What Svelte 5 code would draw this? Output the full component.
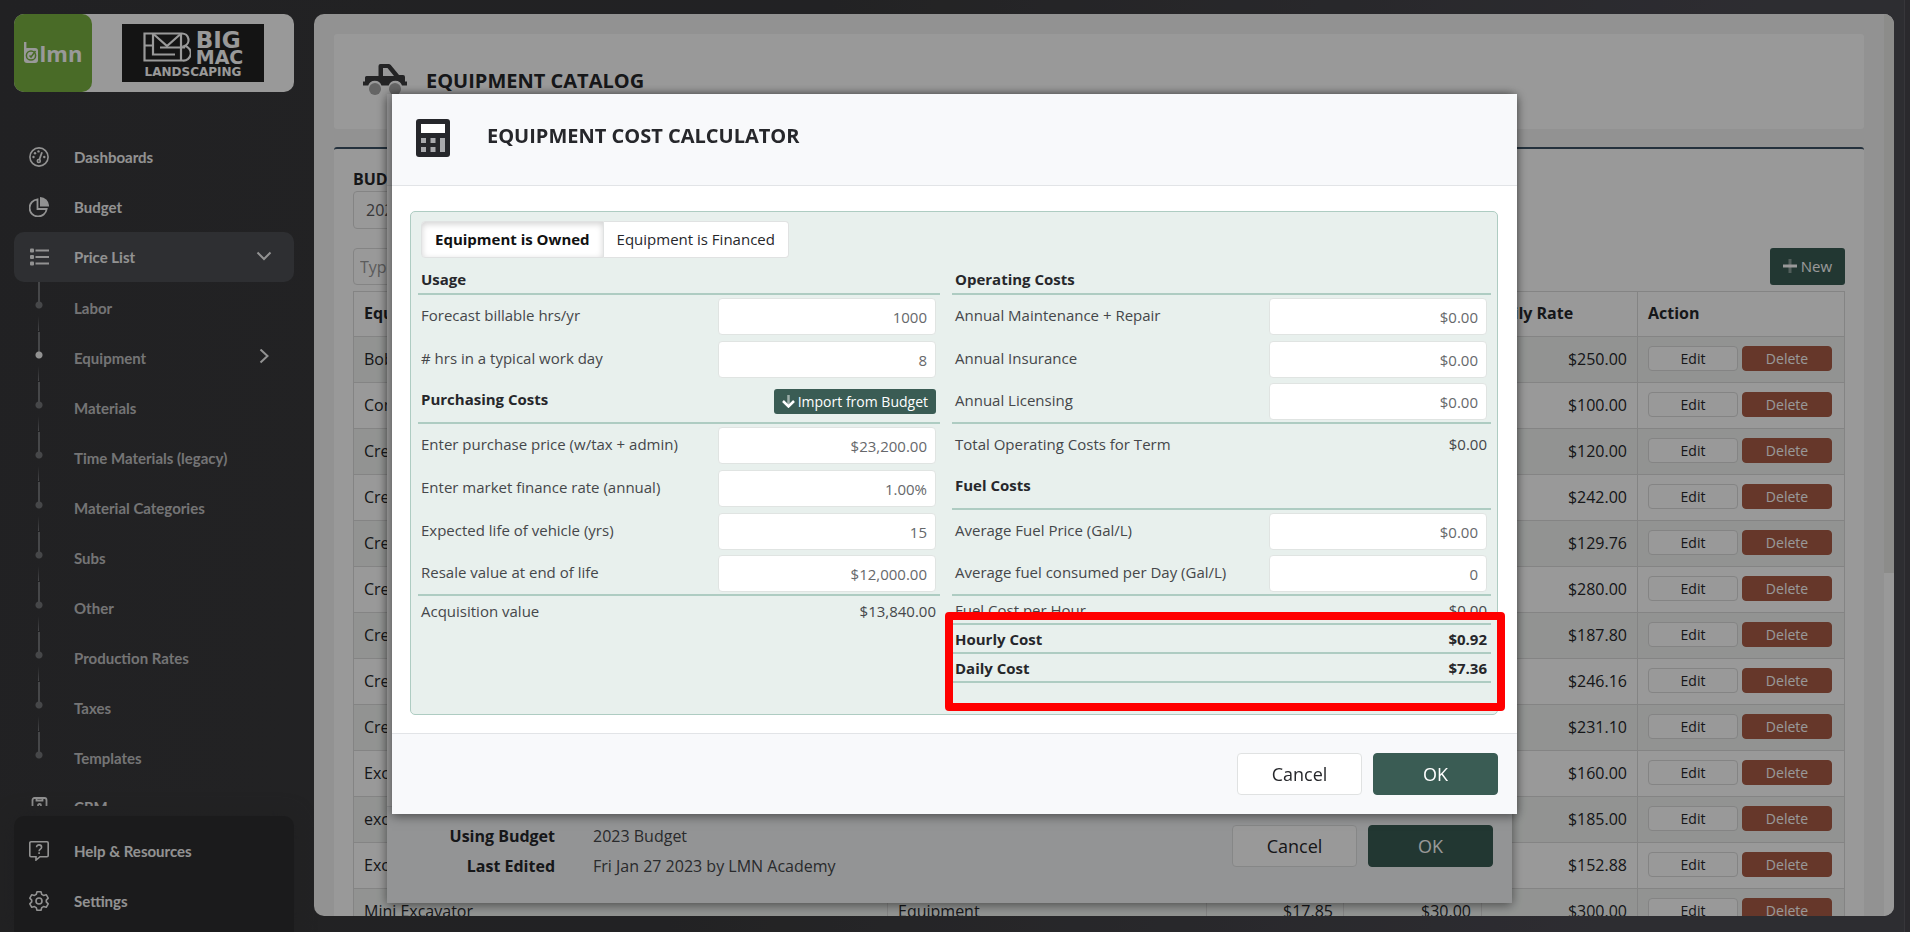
<script lang="ts">
  type Field = {
    kind: "field" | "total" | "heading";
    label: string;
    value?: string;
    ruled?: boolean;
    action?: string;
    bold?: boolean;
    compact?: boolean;
  };

  const subItems = [
    "Labor",
    "Equipment",
    "Materials",
    "Time Materials (legacy)",
    "Material Categories",
    "Subs",
    "Other",
    "Production Rates",
    "Taxes",
    "Templates",
  ];

  const equipment = [
    { name: "Bobcat", cost: "$21.40", rate: "$25.00", daily: "$250.00" },
    { name: "Compactor", cost: "$6.10", rate: "$10.00", daily: "$100.00" },
    { name: "Crew Truck 1", cost: "$8.25", rate: "$12.00", daily: "$120.00" },
    { name: "Crew Truck 2", cost: "$16.80", rate: "$24.20", daily: "$242.00" },
    { name: "Crew Truck 3", cost: "$9.10", rate: "$12.98", daily: "$129.76" },
    { name: "Crew Truck 4", cost: "$19.60", rate: "$28.00", daily: "$280.00" },
    { name: "Crew Truck 5", cost: "$13.15", rate: "$18.78", daily: "$187.80" },
    { name: "Crew Truck 6", cost: "$17.20", rate: "$24.62", daily: "$246.16" },
    { name: "Crew Truck 7", cost: "$16.20", rate: "$23.11", daily: "$231.10" },
    { name: "Excavator", cost: "$11.20", rate: "$16.00", daily: "$160.00" },
    { name: "excavator", cost: "$12.95", rate: "$18.50", daily: "$185.00" },
    { name: "Excavator", cost: "$10.70", rate: "$15.29", daily: "$152.88" },
    { name: "Mini Excavator", cost: "$17.85", rate: "$30.00", daily: "$300.00" },
  ];

  const purchasing: Field[] = [
    { kind: "heading", label: "Usage", ruled: true, compact: true },
    { kind: "field", label: "Forecast billable hrs/yr", value: "1000" },
    { kind: "field", label: "# hrs in a typical work day", value: "8" },
    { kind: "heading", label: "Purchasing Costs", action: "Import from Budget", ruled: true },
    { kind: "field", label: "Enter purchase price (w/tax + admin)", value: "$23,200.00" },
    { kind: "field", label: "Enter market finance rate (annual)", value: "1.00%" },
    { kind: "field", label: "Expected life of vehicle (yrs)", value: "15" },
    { kind: "field", label: "Resale value at end of life", value: "$12,000.00", ruled: true },
    { kind: "total", label: "Acquisition value", value: "$13,840.00", compact: true },
  ];

  const operating: Field[] = [
    { kind: "heading", label: "Operating Costs", ruled: true, compact: true },
    { kind: "field", label: "Annual Maintenance + Repair", value: "$0.00" },
    { kind: "field", label: "Annual Insurance", value: "$0.00" },
    { kind: "field", label: "Annual Licensing", value: "$0.00", ruled: true },
    { kind: "total", label: "Total Operating Costs for Term", value: "$0.00" },
    { kind: "heading", label: "Fuel Costs", ruled: true },
    { kind: "field", label: "Average Fuel Price (Gal/L)", value: "$0.00" },
    { kind: "field", label: "Average fuel consumed per Day (Gal/L)", value: "0", ruled: true },
    { kind: "total", label: "Fuel Cost per Hour", value: "$0.00", ruled: true, compact: true },
    { kind: "total", label: "Hourly Cost", value: "$0.92", ruled: true, compact: true, bold: true },
    { kind: "total", label: "Daily Cost", value: "$7.36", ruled: true, compact: true, bold: true },
  ];

  const columns = [purchasing, operating];

  let ownership = $state("owned");
</script>

<div class="app">
  <aside class="sidebar">
    <div class="brand">
      <div class="lmn">
        <svg width="14" height="22" viewBox="0 0 14 22" fill="none" stroke="#fff" aria-hidden="true">
          <path d="M1.2 0v18.5" stroke-width="2.4" />
          <rect x="0" y="6" width="14" height="15" rx="3" fill="#fff" stroke="none" />
          <circle cx="7" cy="13.500" r="4.600" stroke="#7bb241" stroke-width="1.500" />
          <path d="M5.500 13.500l1.500 1.500 4.500-6" stroke="#7bb241" stroke-width="1.500" />
        </svg>
        <span>lmn</span>
      </div>
      <div class="company">
        <div class="plate">
          <div class="plate-top">
            <svg width="48" height="30" viewBox="0 0 48 30" fill="none" stroke="#fff" stroke-width="2.2" aria-hidden="true">
              <path d="M1.500 1.500H39a6.500 6.500 0 0 1 2.500 12.500A7.200 7.200 0 0 1 39.500 28.500H1.500z" />
              <path d="M10 2v20.500H32M1.500 13.500H10M17 15.500h25" />
              <path d="M11 2.500l13 11.500L37 2.500M38 2v26" />
            </svg>
            <div class="plate-words">
              <span class="big">BIG</span>
              <span class="mac">MAC</span>
            </div>
          </div>
          <span class="land">LANDSCAPING</span>
        </div>
      </div>
    </div>

    <nav class="menu">
      <a class="item" href="#dashboards">
        <svg class="icon" viewBox="0 0 20 20" fill="none" stroke="currentColor" stroke-width="1.600">
          <circle cx="10" cy="10" r="9.100" />
          <path d="M10.300 12.800L13 5.200" stroke-width="1.800" />
          <circle cx="9.800" cy="14" r="1.500" />
          <g fill="currentColor" stroke="none">
            <circle cx="4.500" cy="10" r="1.200" />
            <circle cx="6" cy="6.200" r="1.200" />
            <circle cx="9.500" cy="4.400" r="1.200" />
            <circle cx="15.300" cy="10" r="1.200" />
          </g>
        </svg>
        Dashboards
      </a>
      <a class="item" href="#budget">
        <svg class="icon" viewBox="0 0 20 20">
          <path d="M8.500 2.300A8.600 8.600 0 1 0 17.700 12H8.500z" fill="none" stroke="currentColor" stroke-width="1.800" />
          <path d="M11 0a9 9 0 0 1 9 9.500h-9z" fill="currentColor" />
        </svg>
        Budget
      </a>
      <a class="item active" href="#price-list">
        <svg class="icon" viewBox="0 0 20 20" fill="currentColor">
          <rect x="1" y="1.500" width="4" height="4" rx="1" />
          <rect x="1" y="8" width="4" height="4" rx="1" />
          <rect x="1" y="14.500" width="4" height="4" rx="1" />
          <path d="M6.500 2.600H20v2H6.500zM6.500 9H20v2H6.500zM6.500 15.400H20v2H6.500z" />
        </svg>
        <span class="grow">Price List</span>
        <svg class="arrow" viewBox="0 0 16 16" fill="none" stroke="currentColor" stroke-width="2"><path d="M1.500 3.500L8 10l6.500-6.500" /></svg>
      </a>
      {#each subItems as item}
        <a class="item sub" class:current={item === "Equipment"} href={"#" + item.toLowerCase().replaceAll(" ", "-")}>
          <span class="track"></span>
          <span class="grow">{item}</span>
          {#if item === "Equipment"}
            <svg class="arrow" viewBox="0 0 16 16" fill="none" stroke="currentColor" stroke-width="2"><path d="M4.500 0.500L11.500 7l-7 6.500" /></svg>
          {/if}
        </a>
      {/each}
      <a class="item" href="#crm">
        <svg class="icon" viewBox="0 0 20 20" fill="none" stroke="currentColor" stroke-width="1.800">
          <rect x="3.500" y="1" width="14" height="18" rx="2" />
          <path d="M7.500 1v2.500h6V1" />
          <circle cx="10.500" cy="8.500" r="1.500" />
        </svg>
        CRM
      </a>
    </nav>

    <nav class="support">
      <a class="item" href="#help">
        <svg class="icon" viewBox="0 0 20 20" fill="none" stroke="currentColor" stroke-width="1.600">
          <path d="M2 0.800h16a1.200 1.200 0 0 1 1.200 1.200v12.500a1.200 1.200 0 0 1-1.200 1.200h-7L7 19v-3.300H2A1.200 1.200 0 0 1 .8 14.500V2A1.200 1.200 0 0 1 2 .8z" />
          <path d="M7.600 6.200c0-3.200 5-3 5 0 0 2-2.500 1.900-2.500 4M10.100 11.300v1.800" />
        </svg>
        Help &amp; Resources
      </a>
      <a class="item" href="#settings">
        <svg class="icon" viewBox="0 0 20 20" fill="none" stroke="currentColor" stroke-width="1.600" stroke-linejoin="round">
          <path d="M8 .8h4l.8 2.600 1.700 1 2.700-.7 2 3.400-1.900 2v1.800l1.900 2-2 3.400-2.700-.7-1.700 1-.8 2.600H8l-.8-2.600-1.700-1-2.700.7-2-3.400 1.900-2V9.100l-1.900-2 2-3.400 2.700.7 1.700-1z" />
          <circle cx="10" cy="10" r="3" />
        </svg>
        Settings
      </a>
    </nav>
  </aside>

  <main class="content">
    <div class="page">
      <header class="card title-card">
        <svg width="44" height="32" viewBox="0 0 44 32" aria-hidden="true">
          <path d="M15.500 12V2a2 2 0 0 1 2-2h8a3 3 0 0 1 2.300 1.100L36 11h4a2 2 0 0 1 2 2v4.500h2v4h-5a7 7 0 0 0-13.300 0h-7.200a7 7 0 0 0-13.300 0H0v-4h2V13.500A1.500 1.500 0 0 1 3.500 12zM20 4v8h11l-6.500-8z" fill="#3c3c3f" fill-rule="evenodd" />
          <circle cx="12" cy="25" r="6" fill="#a8a8a8" />
          <circle cx="32" cy="25" r="6" fill="#a8a8a8" />
        </svg>
        <h1>EQUIPMENT CATALOG</h1>
      </header>

      <section class="card catalog">
        <label class="caption" for="budget">BUDGET</label>
        <select id="budget" class="picker">
          <option>2023 Budget</option>
        </select>
        <div class="toolbar">
          <input type="text" placeholder="Type to search" aria-label="Search" />
          <button class="new">
            <svg width="14" height="14" viewBox="0 0 14 14" aria-hidden="true">
              <path d="M5.500 0h3v14h-3z" fill="#fff" opacity="0.400" />
              <path d="M0 5.500h14v3H0z" fill="#fff" />
            </svg>
            New
          </button>
        </div>
        <table>
          <colgroup>
            <col />
            <col class="c-type" />
            <col class="c-cost" />
            <col class="c-rate" />
            <col class="c-daily" />
            <col class="c-action" />
          </colgroup>
          <thead>
            <tr>
              <th>Equipment</th>
              <th>Type</th>
              <th>Cost</th>
              <th>Rate</th>
              <th>Daily Rate</th>
              <th>Action</th>
            </tr>
          </thead>
          <tbody>
            {#each equipment as row}
              <tr>
                <td>{row.name}</td>
                <td>Equipment</td>
                <td class="num">{row.cost}</td>
                <td class="num">{row.rate}</td>
                <td class="num">{row.daily}</td>
                <td>
                  <div class="actions">
                    <button class="edit">Edit</button>
                    <button class="delete">Delete</button>
                  </div>
                </td>
              </tr>
            {/each}
          </tbody>
        </table>
      </section>
    </div>
    <div class="scrollbar"><span></span></div>
  </main>
  <div class="edge"></div>
</div>

<!-- Item editor, sits under the calculator -->
<div class="layer under">
  <div class="modal editor">
    <div class="modal-head"></div>
    <div class="modal-body"></div>
    <footer class="editor-foot">
      <dl>
        <dt>Using Budget</dt>
        <dd>2023 Budget</dd>
        <dt>Last Edited</dt>
        <dd>Fri Jan 27 2023 by LMN Academy</dd>
      </dl>
      <div class="choices">
        <button class="choice">Cancel</button>
        <button class="choice ok">OK</button>
      </div>
    </footer>
  </div>
</div>

<div class="layer shade">
  <div class="modal" role="dialog" aria-labelledby="calc-title">
    <header class="modal-head">
      <svg width="34" height="38" viewBox="0 0 34 38" aria-hidden="true">
        <rect width="34" height="38" rx="3" fill="#26272b" />
        <rect x="5" y="5" width="24" height="9" fill="#fff" />
        <g fill="#a9aaad">
          <path d="M5 19h5v5H5zM14.500 19h5v5h-5zM5 28h5v5H5zM14.500 28h5v5h-5zM24 19h5v14h-5z" />
        </g>
      </svg>
      <h2 id="calc-title">EQUIPMENT COST CALCULATOR</h2>
    </header>

    <div class="modal-body">
      <div class="calc">
        <div class="tabs">
          <button class:chosen={ownership === "owned"} onclick={() => (ownership = "owned")}>Equipment is Owned</button>
          <button class:chosen={ownership === "financed"} onclick={() => (ownership = "financed")}>Equipment is Financed</button>
        </div>
        <div class="columns">
          {#each columns as fields, c}
            <div class="column">
              {#each fields as f, i}
                <div class="row" class:ruled={f.ruled} class:compact={f.compact} class:bold={f.bold}>
                  {#if f.kind === "heading"}
                    <h3>{f.label}</h3>
                    {#if f.action}
                      <button class="import">
                        <svg width="13" height="13" viewBox="0 0 13 13" fill="none" stroke="#fff" aria-hidden="true">
                          <path d="M6.500 0v11" stroke-width="2.500" opacity="0.500" />
                          <path d="M1 6l5.500 5.500L12 6" stroke-width="2.500" />
                        </svg>
                        {f.action}
                      </button>
                    {/if}
                  {:else if f.kind === "field"}
                    <label for={`f-${c}-${i}`}>{f.label}</label>
                    <input id={`f-${c}-${i}`} type="text" value={f.value} />
                  {:else}
                    <span>{f.label}</span>
                    <span>{f.value}</span>
                  {/if}
                </div>
              {/each}
            </div>
          {/each}
        </div>
        <div class="highlight"></div>
      </div>
    </div>

    <footer class="modal-foot">
      <button class="choice">Cancel</button>
      <button class="choice ok">OK</button>
    </footer>
  </div>
</div>

<style>
  :global(body) {
    margin: 0;
    overflow: hidden;
    font-family: "Open Sans", sans-serif;
    font-size: 16px;
    color: #26272b;
  }

  * {
    box-sizing: border-box;
  }

  button,
  input,
  select {
    font-family: inherit;
    margin: 0;
  }

  h1,
  h2,
  h3,
  dl,
  dd {
    margin: 0;
  }

  .app {
    position: relative;
    display: flex;
    gap: 20px;
    height: 100vh;
    padding: 0 16px 0 14px;
    background: linear-gradient(100deg, #38383b, #3a3a3c 40%, #4c4b53 85%);
  }

  .edge {
    position: absolute;
    top: 0;
    right: 0;
    width: 6px;
    height: 100%;
    background: #46454c;
    border-left: 1px solid #5c5b62;
  }

  /* Sidebar */
  .sidebar {
    flex: none;
    display: flex;
    flex-direction: column;
    width: 280px;
    padding-top: 14px;
  }

  .brand {
    flex: none;
    display: flex;
    height: 78px;
    border-radius: 10px;
    background: #fff;
  }

  .lmn {
    display: flex;
    align-items: center;
    justify-content: center;
    gap: 2px;
    width: 78px;
    border-radius: 10px;
    background: #7bb241;
    color: #fff;
    font-size: 22px;
    font-weight: 700;
  }

  .company {
    flex: 1;
    display: flex;
    align-items: center;
    padding-left: 30px;
  }

  .plate {
    display: flex;
    flex-direction: column;
    align-items: center;
    width: 142px;
    height: 58px;
    padding-top: 8px;
    background: #222;
    color: #fff;
    font-family: "DejaVu Sans", sans-serif;
    font-weight: 700;
  }

  .plate-top {
    display: flex;
    gap: 5px;
  }

  .plate-words {
    display: flex;
    flex-direction: column;
  }

  .big {
    font-size: 23px;
    line-height: 17px;
  }

  .mac {
    font-size: 19px;
    line-height: 16px;
  }

  .land {
    margin-top: 1px;
    font-size: 12px;
    line-height: 12px;
  }

  .menu {
    flex: 1;
    min-height: 0;
    margin-top: 40px;
    overflow: hidden;
  }

  .support {
    margin: 10px 0 0;
    padding: 10px 0 6px;
    border-radius: 10px 10px 0 0;
    background: #2e2e2f;
    box-shadow: 0 0 20px #353537;
  }

  .item {
    display: flex;
    align-items: center;
    height: 50px;
    padding: 0 22px 0 15px;
    border-radius: 10px;
    color: #f4f4f4;
    font-family: Lato, sans-serif;
    font-size: 15px;
    font-weight: 700;
    text-decoration: none;
  }

  .item.active {
    background: #4d4f54;
  }

  .icon {
    width: 20px;
    height: 20px;
    margin-right: 25px;
  }

  .grow {
    flex: 1;
  }

  .arrow {
    width: 16px;
    height: 16px;
  }

  .sub {
    color: #c2c2c4;
  }

  .sub .grow {
    padding-top: 2px;
  }

  .sub .arrow {
    color: #f4f4f4;
  }

  .track {
    width: 20px;
    height: 50px;
    margin-right: 25px;
    background:
      radial-gradient(circle at 10px 23px, #76777b 3px, transparent 4px),
      linear-gradient(#76777b, #76777b) 9px 0 / 2px 20px no-repeat,
      linear-gradient(transparent, #76777b) 9px 34px / 1px 15px no-repeat;
  }

  .current .track {
    background:
      radial-gradient(circle at 10px 23px, #f4f4f4 3px, transparent 4px),
      linear-gradient(#76777b, #76777b) 9px 0 / 2px 20px no-repeat,
      linear-gradient(transparent, #76777b) 9px 34px / 1px 15px no-repeat;
  }

  .sub:nth-last-child(2) .track {
    background:
      radial-gradient(circle at 10px 23px, #76777b 3px, transparent 4px),
      linear-gradient(#76777b, #76777b) 9px 0 / 2px 20px no-repeat;
  }

  /* Catalog page */
  .content {
    flex: 1;
    display: flex;
    margin: 14px 0 16px;
    border-radius: 10px;
    background: #f3f3f3;
    overflow: hidden;
  }

  .page {
    flex: 1;
    padding: 20px 20px 0;
  }

  .scrollbar {
    width: 10px;
    background: #fff;
  }

  .scrollbar span {
    display: block;
    height: 62%;
    background: #e9e9e7;
  }

  .card {
    background: #fff;
    border-radius: 3px;
  }

  .title-card {
    display: flex;
    align-items: center;
    gap: 19px;
    height: 95px;
    padding: 0 29px 3px;
  }

  h1,
  h2 {
    font-size: 20px;
    font-weight: 700;
  }

  .catalog {
    margin-top: 18px;
    padding: 19px 19px 0;
    border-top: 2px solid #3c5366;
  }

  .caption {
    display: block;
    font-weight: 700;
    line-height: 23px;
  }

  .picker {
    width: 300px;
    height: 38px;
    padding: 0 8px;
    border: 1px solid #dcdcdc;
    border-radius: 4px;
    background: #fff;
    color: #5c5c60;
    font-size: 16px;
  }

  .toolbar {
    display: flex;
    justify-content: space-between;
    margin: 19px 0 6px;
  }

  .toolbar input {
    width: 300px;
    height: 37px;
    padding: 0 6px;
    border: 1px solid #dcdcdc;
    border-radius: 4px;
    background: #fff;
    font-size: 16px;
  }

  .toolbar input::placeholder {
    color: #999;
  }

  .new {
    display: flex;
    align-items: center;
    justify-content: center;
    gap: 4px;
    width: 75px;
    height: 37px;
    padding: 0 0 2px;
    border: 0;
    border-radius: 3px;
    background: #3a5c54;
    color: #fff;
    font-size: 15px;
  }

  table {
    width: 100%;
    table-layout: fixed;
    border-collapse: collapse;
  }

  .c-type {
    width: 319px;
  }

  .c-cost {
    width: 137px;
  }

  .c-rate {
    width: 138px;
  }

  .c-daily {
    width: 156px;
  }

  .c-action {
    width: 207px;
  }

  th,
  td {
    height: 46px;
    padding: 0 10px 2px;
    border: 1px solid #dcdcdc;
    text-align: left;
  }

  th {
    height: 45px;
    font-weight: 700;
  }

  tbody tr:nth-child(odd) {
    background: #f3f6f4;
  }

  .num {
    text-align: right;
  }

  .actions {
    display: flex;
    gap: 4px;
  }

  .actions button {
    width: 90px;
    height: 25px;
    padding: 0;
    border: 1px solid #dcdcdc;
    border-radius: 4px;
    background: #fff;
    color: #26272b;
    font-size: 14px;
  }

  .actions .delete {
    border-color: #ab5d46;
    background: #ab5d46;
    color: #fff;
  }

  /* Dialogs */
  .layer {
    position: fixed;
    inset: 0;
    padding: 94px 1px 0 0;
  }

  .layer.under {
    padding-right: 11px;
  }

  .shade {
    background: rgba(0, 0, 0, 0.4);
  }

  .modal {
    width: 1125px;
    max-width: 100%;
    margin: 0 auto;
    background: #fff;
    box-shadow: 0 2px 10px rgba(0, 0, 0, 0.5);
  }

  .modal-head {
    display: flex;
    align-items: center;
    gap: 37px;
    height: 92px;
    padding: 0 24px 8px;
    border-bottom: 1px solid #e2e4e7;
    background: #f8f9fb;
  }

  .modal-head svg {
    margin-top: 4px;
  }

  .modal-body {
    padding: 25px 19px 18px 18px;
  }

  .editor .modal-body {
    height: 620px;
  }

  .calc {
    position: relative;
    padding: 9px 6px 31px 7px;
    border: 1px solid #aeccc2;
    border-radius: 5px;
    background: #e8f0ed;
  }

  .tabs {
    display: flex;
    margin-left: 3px;
  }

  .tabs button {
    height: 37px;
    padding: 0 13px 2px;
    border: 1px solid #e0e2e2;
    border-radius: 0 4px 4px 0;
    background: #fff;
    color: #26272b;
    font-size: 15px;
  }

  .tabs button:first-child {
    border-radius: 4px 0 0 4px;
  }

  .tabs button:last-child {
    border-left: 0;
  }

  .tabs .chosen {
    box-shadow: inset 0 2px 6px rgba(0, 0, 0, 0.18);
    color: #111;
    font-weight: 700;
  }

  .columns {
    display: grid;
    grid-template-columns: 522fr 539fr;
    gap: 12px;
    margin-top: 6px;
  }

  .row {
    display: flex;
    align-items: center;
    justify-content: space-between;
    height: 43px;
    padding: 0 4px 1px 3px;
    color: #45474a;
    font-size: 15px;
  }

  .row.ruled {
    border-bottom: 2px solid #aeccc2;
  }

  .row label,
  .row:not(.compact) span {
    padding-bottom: 2px;
  }

  .row.compact {
    height: 29px;
    padding-bottom: 0;
  }

  .row.compact:first-child {
    height: 31px;
  }

  .row.bold {
    color: #26272b;
    font-weight: 700;
  }

  h3 {
    color: #26272b;
    font-size: 15px;
    font-weight: 700;
  }

  .row:not(.compact) h3 {
    padding-bottom: 4px;
  }

  .row input {
    width: 218px;
    height: 37px;
    padding: 2px 8px 0;
    border: 1px solid #e0e4e2;
    border-radius: 4px;
    background: #fff;
    color: #66686b;
    font-size: 15px;
    text-align: right;
  }

  .import {
    display: flex;
    align-items: center;
    gap: 3px;
    height: 25px;
    padding: 0 8px;
    border: 0;
    border-radius: 3px;
    background: #3a5c54;
    color: #fff;
    font-size: 14px;
  }

  .highlight {
    position: absolute;
    right: -8px;
    bottom: 3px;
    width: 560px;
    height: 99px;
    border: 8px solid #f00;
    border-radius: 4px;
    pointer-events: none;
  }

  .modal-foot {
    display: flex;
    justify-content: flex-end;
    gap: 11px;
    height: 81px;
    padding: 19px 19px 0;
    border-top: 1px solid #e2e4e7;
    background: #f8f9fb;
  }

  .editor-foot {
    display: flex;
    justify-content: space-between;
    height: 97px;
    padding: 14px 19px 0 40px;
    border-top: 1px solid #e2e4e7;
    background: #f6f7f9;
  }

  .editor-foot dl {
    display: grid;
    grid-template-columns: 128px auto;
    grid-auto-rows: 30px;
    column-gap: 38px;
    line-height: 30px;
  }

  .editor-foot dt {
    font-weight: 700;
    text-align: right;
  }

  .editor-foot dd {
    color: #45474a;
  }

  .choices {
    display: flex;
    gap: 11px;
    padding-top: 4px;
  }

  .choice {
    width: 125px;
    height: 42px;
    border: 1px solid #e0e2e2;
    border-radius: 4px;
    background: #fff;
    color: #26272b;
    font-size: 18px;
  }

  .choice.ok {
    border-color: #3a5c54;
    background: #3a5c54;
    color: #fff;
  }
</style>
